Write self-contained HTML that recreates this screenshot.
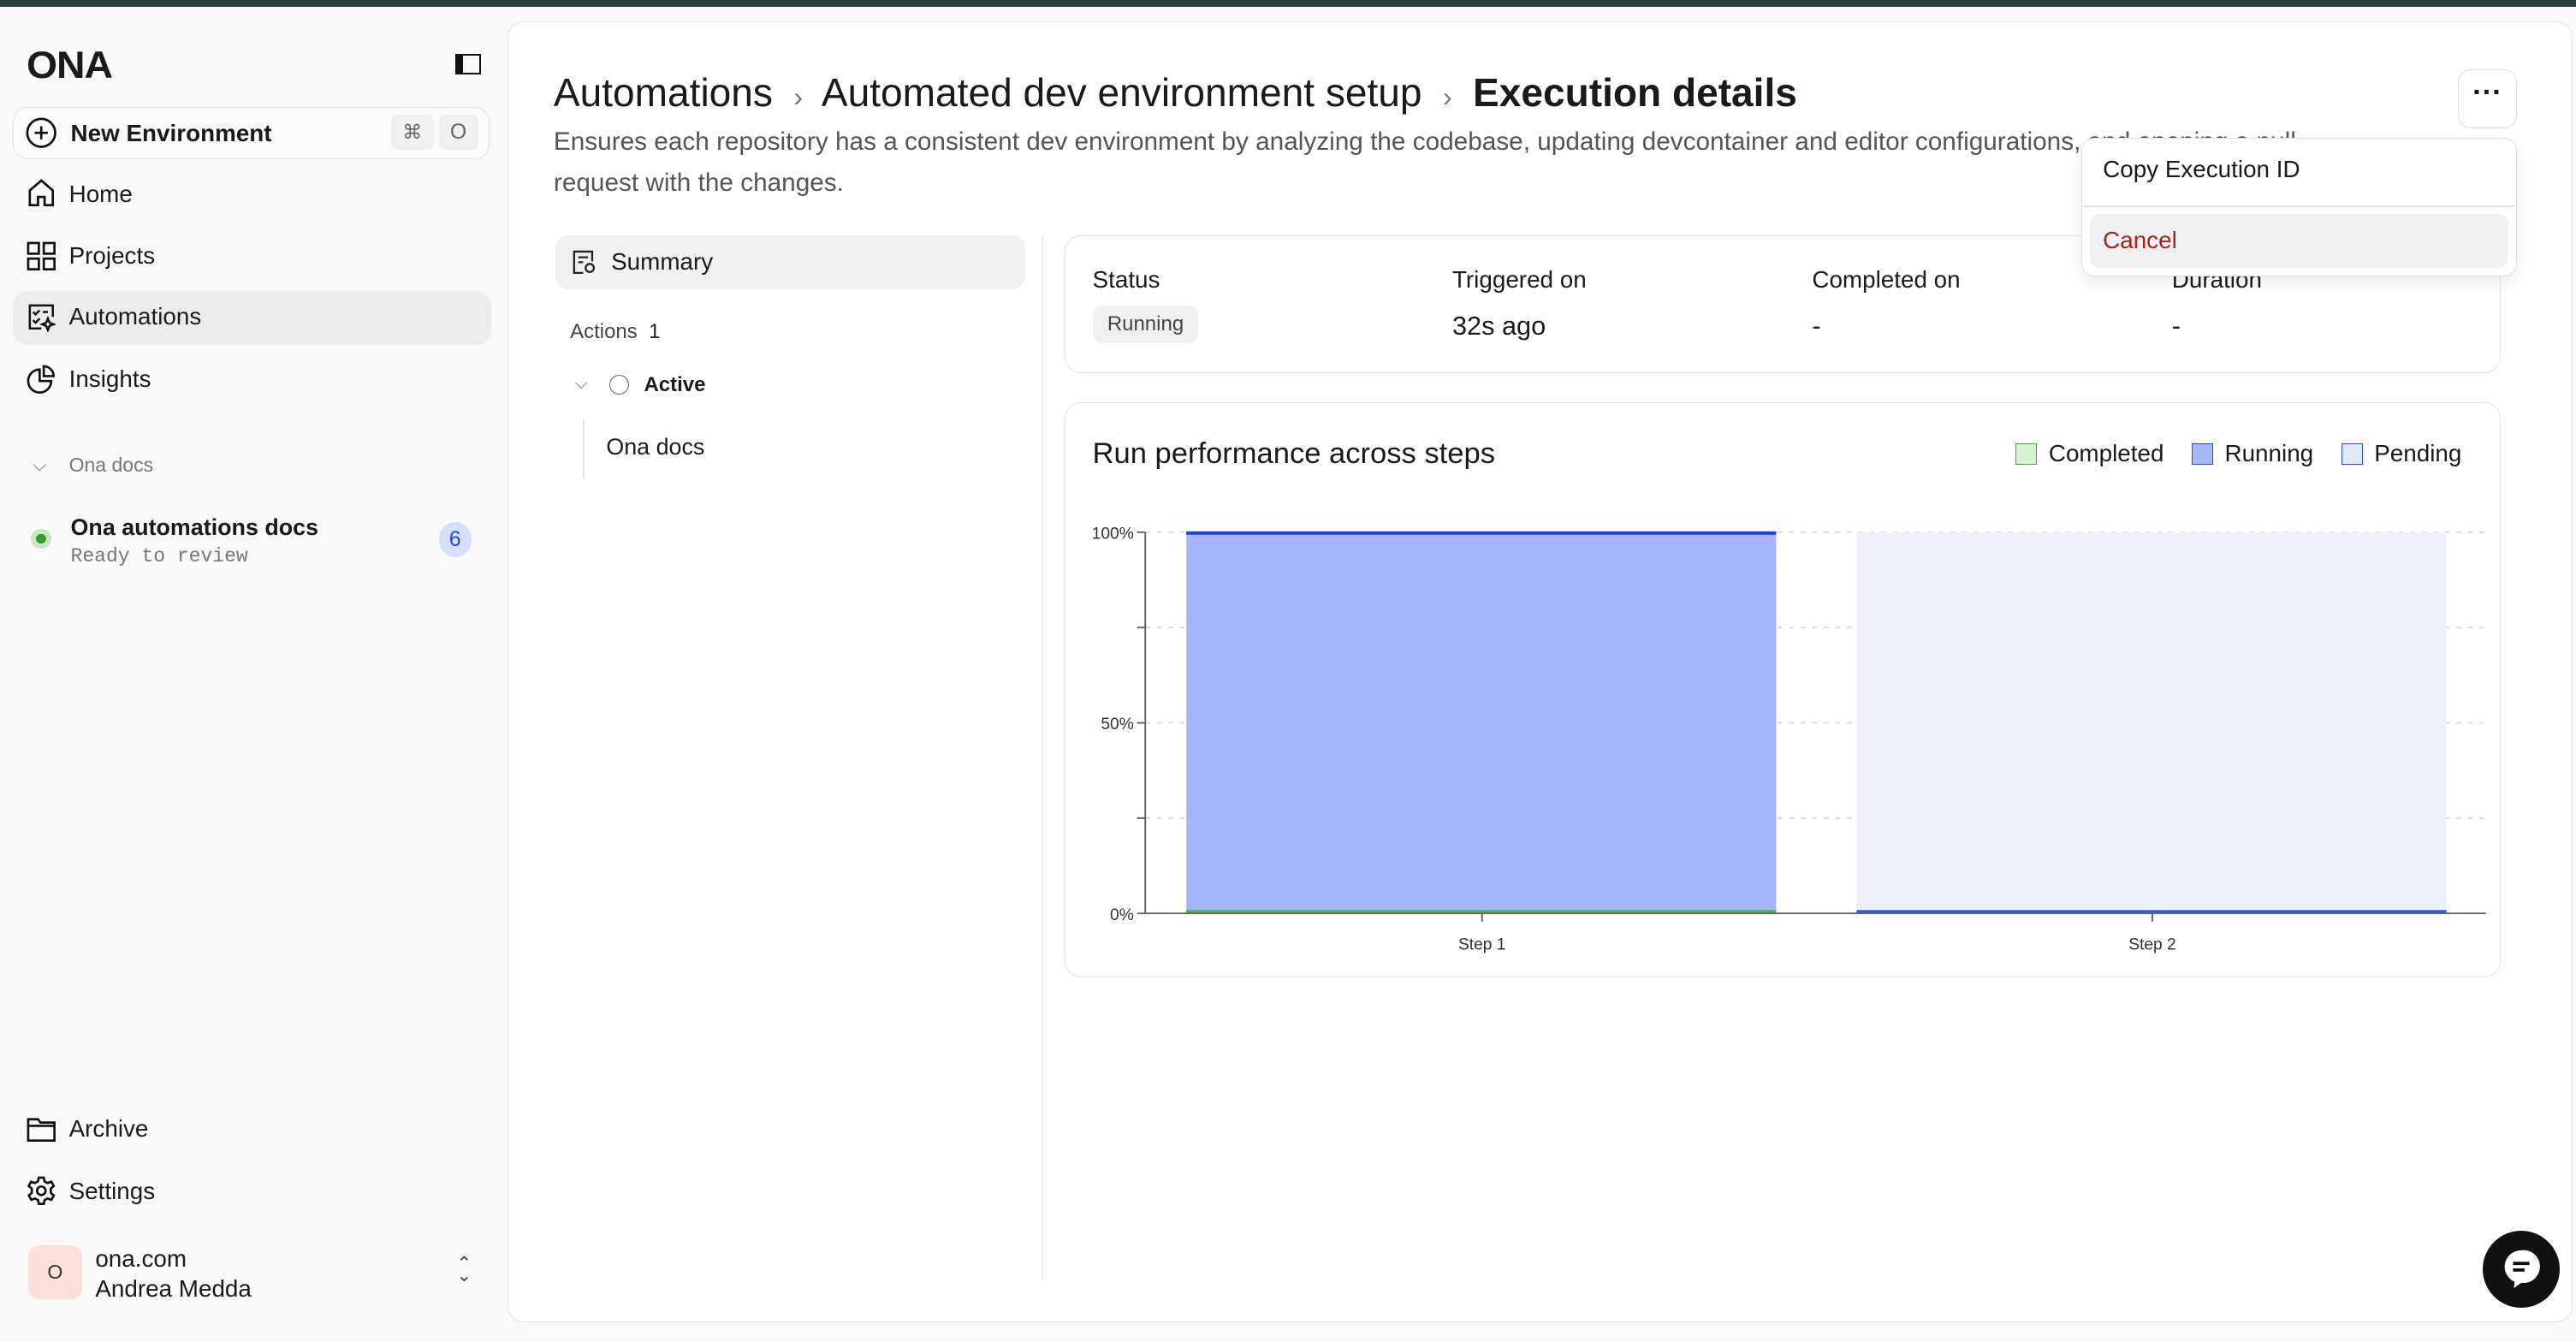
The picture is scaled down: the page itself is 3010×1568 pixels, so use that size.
<!DOCTYPE html>
<html><head><meta charset="utf-8"><style>
html,body{margin:0;padding:0}
body{width:1568px;height:817px;zoom:1.91964;background:#f9f9f9;font-family:"Liberation Sans",sans-serif;color:#1a1a1a;position:relative;overflow:hidden}
.a{position:absolute}
.nav{position:absolute;left:16px;font-size:14.5px;display:flex;align-items:center;gap:8px}
svg{display:block}
</style></head><body>
<div class="a" style="left:0;top:0;width:1568px;height:4px;background:#2f3d3a"></div>
<!-- sidebar -->
<div class="a" style="left:16px;top:27px;font-size:23px;font-weight:900;letter-spacing:-0.5px;transform:scaleX(1.05);transform-origin:left">ONA</div>
<div class="a" style="left:277px;top:33px;width:10px;height:10px;border:1.5px solid #111;border-left:5px solid #111"></div>
<div class="a" style="left:8px;top:65px;width:289px;height:31px;border:1px solid #e3e3e3;border-radius:9px;background:#fbfbfb"></div>
<svg class="a" style="left:15px;top:71px" width="20" height="20" viewBox="0 0 20 20"><circle cx="10" cy="10" r="8.5" fill="none" stroke="#111" stroke-width="1.4"/><path d="M10 6v8M6 10h8" stroke="#111" stroke-width="1.4"/></svg>
<div class="a" style="left:43px;top:73px;font-size:14.5px;font-weight:600">New Environment</div>
<div class="a" style="left:238px;top:70px;width:26px;height:21px;background:#f0f0f0;border-radius:4px;font-size:12px;color:#666;text-align:center;line-height:21px">⌘</div>
<div class="a" style="left:267px;top:70px;width:24px;height:21px;background:#f0f0f0;border-radius:4px;font-size:13px;color:#666;text-align:center;line-height:21px">O</div>
<div class="nav" style="top:109px"><svg width="18" height="18" viewBox="0 0 18 18"><path d="M2 16V7l7-6 7 6v9h-5v-5H7v5z" fill="none" stroke="#111" stroke-width="1.4"/></svg><span>Home</span></div>
<div class="nav" style="top:147px"><svg width="18" height="18" viewBox="0 0 18 18"><g fill="none" stroke="#111" stroke-width="1.4"><rect x="1" y="1" width="6.5" height="6.5"/><rect x="10.5" y="1" width="6.5" height="6.5"/><rect x="1" y="10.5" width="6.5" height="6.5"/><rect x="10.5" y="10.5" width="6.5" height="6.5"/></g></svg><span>Projects</span></div>
<div class="a" style="left:8px;top:177px;width:291px;height:33px;background:#ececec;border-radius:9px"></div>
<div class="nav" style="top:184px"><svg width="18" height="18" viewBox="0 0 18 18"><g fill="none" stroke="#111" stroke-width="1.3"><path d="M9 16H2V2h14v7"/><path d="M4 6l1.5 1.5L8 5M4 11l1.5 1.5L8 10M10 6h3"/><path d="M13 10l1 2.5 2.5 1-2.5 1-1 2.5-1-2.5-2.5-1 2.5-1z"/></g></svg><span>Automations</span></div>
<div class="nav" style="top:222px"><svg width="18" height="18" viewBox="0 0 18 18"><g fill="none" stroke="#111" stroke-width="1.4"><path d="M8 3a7 7 0 1 0 7 7H8z"/><path d="M10.5 1v6h6a6 6 0 0 0-6-6z"/></g></svg><span>Insights</span></div>
<div class="a" style="left:20px;top:277px;font-size:11px;color:#777">⌵</div>
<div class="a" style="left:42px;top:276px;font-size:12px;color:#777">Ona docs</div>
<div class="a" style="left:19px;top:322px;width:12px;height:12px;border-radius:50%;background:#c6e8c2"></div>
<div class="a" style="left:22px;top:325px;width:6px;height:6px;border-radius:50%;background:#3d9a2f"></div>
<div class="a" style="left:43px;top:313px;font-size:14px;font-weight:600">Ona automations docs</div>
<div class="a" style="left:43px;top:332px;font-size:12px;color:#777;font-family:'Liberation Mono',monospace">Ready to review</div>
<div class="a" style="left:267px;top:318px;width:20px;height:21px;border-radius:50%;background:#d5defa;color:#2448d8;font-size:13px;text-align:center;line-height:21px">6</div>
<div class="nav" style="top:678px"><svg width="18" height="18" viewBox="0 0 18 18"><g fill="none" stroke="#111" stroke-width="1.4"><path d="M1 3h6l1.5 2H17v11H1z"/><path d="M1 7h16"/></g></svg><span>Archive</span></div>
<div class="nav" style="top:716px"><svg width="18" height="18" viewBox="0 0 18 18"><g fill="none" stroke="#111" stroke-width="1.4"><circle cx="9" cy="9" r="2.6"/><path d="M7.5 1h3l.5 2.3 1.8 1 2.3-.8 1.5 2.6-1.8 1.6v2.6l1.8 1.6-1.5 2.6-2.3-.8-1.8 1-.5 2.3h-3l-.5-2.3-1.8-1-2.3.8-1.5-2.6 1.8-1.6V7.7L1.3 6.1l1.5-2.6 2.3.8 1.8-1z"/></g></svg><span>Settings</span></div>
<div class="a" style="left:17px;top:758px;width:33px;height:33px;border-radius:7px;background:#fde0da;font-size:12px;text-align:center;line-height:33px;color:#333">O</div>
<div class="a" style="left:58px;top:758px;font-size:14.5px">ona.com</div>
<div class="a" style="left:58px;top:776px;font-size:14.5px">Andrea Medda</div>
<div class="a" style="left:278px;top:766px;font-size:11px;color:#444;line-height:7px">⌃<br>⌄</div>
<!-- main panel -->
<div class="a" style="left:309px;top:13px;width:1256px;height:791px;background:#fff;border:1px solid #e3e3e3;border-radius:10px"></div>
<div class="a" style="left:337px;top:42px;font-size:24px;white-space:nowrap">Automations <span style="color:#777;font-size:17px;margin:0 6px">›</span> Automated dev environment setup <span style="color:#777;font-size:17px;margin:0 6px">›</span> <b style="font-weight:600">Execution details</b></div>
<div class="a" style="left:337px;top:74px;width:1160px;font-size:15.5px;color:#555;line-height:25px">Ensures each repository has a consistent dev environment by analyzing the codebase, updating devcontainer and editor configurations, and opening a pull<br>request with the changes.</div>
<div class="a" style="left:1496px;top:42px;width:35px;height:35px;border:1px solid #ddd;border-radius:8px;background:#fff;text-align:center;font-size:18px;line-height:28px;font-weight:bold">···</div>
<!-- left col -->
<div class="a" style="left:338px;top:143px;width:286px;height:33px;background:#f0f0f0;border-radius:8px"></div>
<svg class="a" style="left:348px;top:152px" width="15" height="15" viewBox="0 0 15 15"><g fill="none" stroke="#222" stroke-width="1.2"><path d="M7 14H1.5V1h11v6"/><path d="M4 4.5h6M4 7.5h3"/><circle cx="11" cy="11" r="2.5"/></g></svg>
<div class="a" style="left:372px;top:151px;font-size:14.5px">Summary</div>
<div class="a" style="left:347px;top:195px;font-size:12.5px;color:#444">Actions &nbsp;<span style="color:#222">1</span></div>
<div class="a" style="left:350px;top:228px;font-size:10px;color:#666">⌵</div>
<div class="a" style="left:371px;top:228px;width:11px;height:11px;border:1px solid #666;border-radius:50%"></div>
<div class="a" style="left:392px;top:227px;font-size:12.5px;font-weight:600">Active</div>
<div class="a" style="left:355px;top:255px;width:1px;height:36px;background:#e5e5e5"></div>
<div class="a" style="left:369px;top:264px;font-size:14px">Ona docs</div>
<div class="a" style="left:634px;top:143px;width:1px;height:637px;background:#eee"></div>
<!-- status card -->
<div class="a" style="left:648px;top:143px;width:873px;height:83px;border:1px solid #e3e3e3;border-radius:10px"></div>
<div class="a" style="left:665px;top:162px;font-size:14.5px">Status</div>
<div class="a" style="left:665px;top:186px;padding:0 9px;height:23px;line-height:23px;background:#f0f0f0;border-radius:6px;font-size:12.5px;color:#444">Running</div>
<div class="a" style="left:884px;top:162px;font-size:14.5px">Triggered on</div>
<div class="a" style="left:884px;top:189px;font-size:16px">32s ago</div>
<div class="a" style="left:1103px;top:162px;font-size:14.5px">Completed on</div>
<div class="a" style="left:1103px;top:189px;font-size:16px">-</div>
<div class="a" style="left:1322px;top:162px;font-size:14.5px">Duration</div>
<div class="a" style="left:1322px;top:189px;font-size:16px">-</div>
<!-- chart card -->
<div class="a" style="left:648px;top:245px;width:873px;height:349px;border:1px solid #e3e3e3;border-radius:10px"></div>
<div class="a" style="left:665px;top:266px;font-size:18px">Run performance across steps</div>
<div class="a" style="left:1227px;top:268px;font-size:14.5px;display:flex;align-items:center;gap:7px;white-space:nowrap">
<span style="width:12px;height:12px;border:1px solid #5a9a50;background:#d8f0d3;display:inline-block"></span>Completed
<span style="width:12px;height:12px;border:1px solid #2d4fe0;background:#a9b8fb;display:inline-block;margin-left:10px"></span>Running
<span style="width:12px;height:12px;border:1px solid #2d4fe0;background:#e3e9fd;display:inline-block;margin-left:10px"></span>Pending</div>
<svg class="a" style="left:650px;top:310px" width="870" height="280" viewBox="650 310 870 280">
<g stroke="#ddd" stroke-dasharray="3 4"><line x1="697" y1="324" x2="1513" y2="324"/><line x1="697" y1="382" x2="1513" y2="382"/><line x1="697" y1="440" x2="1513" y2="440"/><line x1="697" y1="498" x2="1513" y2="498"/></g>
<rect x="722" y="324" width="359" height="232" fill="#a6b5fa"/>
<line x1="722" y1="324.5" x2="1081" y2="324.5" stroke="#1e3fe0" stroke-width="2"/>
<line x1="722" y1="555" x2="1081" y2="555" stroke="#4caf50" stroke-width="2"/>
<rect x="1130" y="324" width="359" height="232" fill="#eef1fc"/>
<line x1="1130" y1="555" x2="1489" y2="555" stroke="#2f55e6" stroke-width="2"/>
<g stroke="#666" stroke-width="1"><line x1="697" y1="324" x2="697" y2="556"/><line x1="697" y1="556" x2="1513" y2="556"/><line x1="692" y1="324" x2="697" y2="324"/><line x1="692" y1="382" x2="697" y2="382"/><line x1="692" y1="440" x2="697" y2="440"/><line x1="692" y1="498" x2="697" y2="498"/><line x1="692" y1="556" x2="697" y2="556"/><line x1="902" y1="556" x2="902" y2="561"/><line x1="1310" y1="556" x2="1310" y2="561"/></g>
<g font-family="Liberation Sans" font-size="10" fill="#333"><text x="690" y="328" text-anchor="end">100%</text><text x="690" y="444" text-anchor="end">50%</text><text x="690" y="560" text-anchor="end">0%</text><text x="902" y="578" text-anchor="middle">Step 1</text><text x="1310" y="578" text-anchor="middle">Step 2</text></g>
</svg>
<!-- dropdown -->
<div class="a" style="left:1267px;top:84px;width:264px;height:83px;background:#fff;border:1px solid #e0e0e0;border-radius:8px;box-shadow:0 4px 10px rgba(0,0,0,0.08)"></div>
<div class="a" style="left:1280px;top:95px;font-size:14.5px">Copy Execution ID</div>
<div class="a" style="left:1268px;top:125px;width:263px;height:1px;background:#e5e5e5"></div>
<div class="a" style="left:1272px;top:130px;width:255px;height:33px;background:#f1f1f1;border-radius:6px"></div>
<div class="a" style="left:1280px;top:138px;font-size:14.5px;color:#b0201a">Cancel</div>
<!-- chat -->
<div class="a" style="left:1511px;top:749px;width:47px;height:47px;border-radius:50%;background:#111"></div>
<svg class="a" style="left:1522px;top:759px" width="25" height="27" viewBox="0 0 25 27"><path d="M12.5 2a10 10 0 0 0-4 19.2L8 25l4.5-3.2A10 10 0 1 0 12.5 2z" fill="#fff"/><path d="M7.5 10h10M7.5 14h7" stroke="#111" stroke-width="2"/></svg>
</body></html>
